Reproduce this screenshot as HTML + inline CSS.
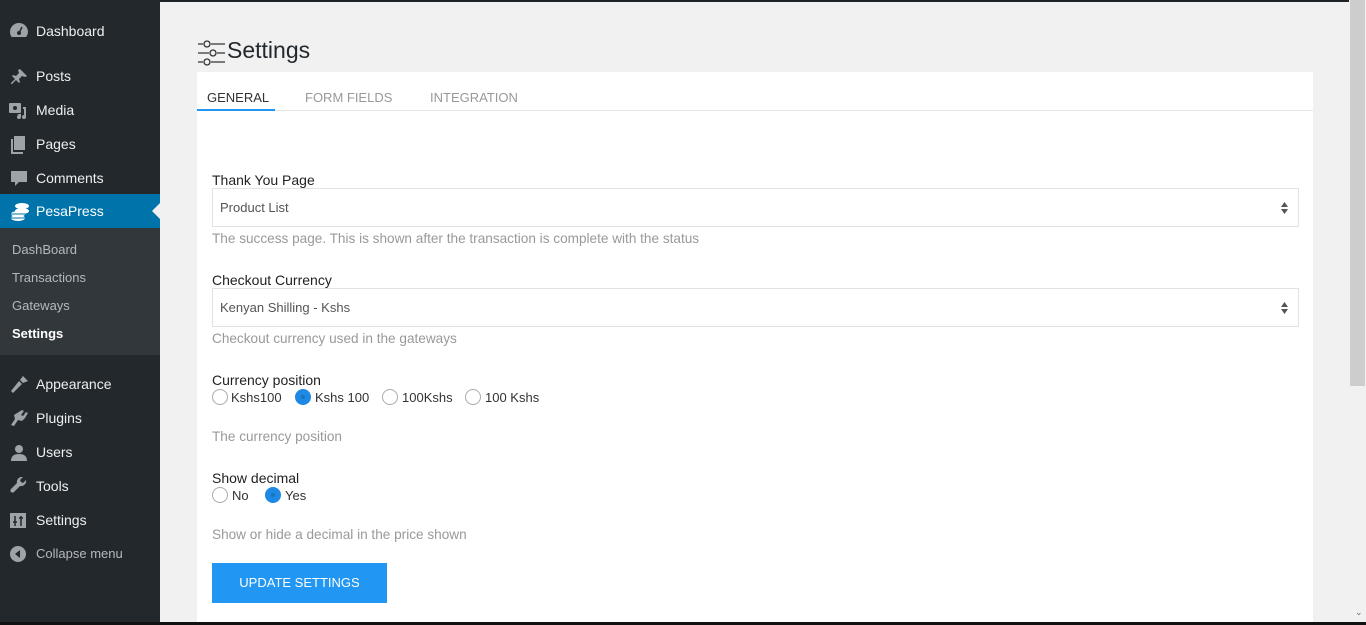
<!DOCTYPE html>
<html style="overflow:hidden"><head><meta charset="utf-8"><style>
*{box-sizing:border-box;margin:0;padding:0}
html,body{width:1366px;height:625px;overflow:hidden}
body{background:#f1f1f1;font-family:"Liberation Sans",sans-serif;position:relative}
#side{position:absolute;left:0;top:0;width:160px;height:625px;background:#23282d}
.mi{position:absolute;left:0;width:160px;height:34px;color:#eee;font-size:14px;line-height:34px;padding-left:36px}
.mi svg{position:absolute;left:9px;top:8px}
.sub{position:absolute;left:0;top:228px;width:160px;height:127px;background:#32373c}
.sub div{position:absolute;left:12px;font-size:13px;color:#b4b9be}
.t{position:absolute;white-space:nowrap}
.card{position:absolute;left:197px;top:72px;width:1116px;height:550px;background:#fff}
.sel{position:absolute;left:212px;width:1087px;height:39px;border:1px solid #e2e2e2;font-size:13px;color:#555;line-height:37px;padding-left:7px}
.arr{position:absolute;right:10px;top:12px;width:7px;height:14px}
.lbl{font-size:14px;color:#222}
.help{font-size:13.6px;color:#999}
.r{position:absolute;width:16px;height:16px;border-radius:50%;border:1px solid #aaa;background:#fff}
.r.on{background:#1e88e5;border-color:#1e88e5}
.r.on:after{content:"";position:absolute;left:5px;top:5px;width:4px;height:4px;border-radius:50%;background:#1976b8}
</style></head><body>
<div id="side">
<div class="mi" style="top:14px">Dashboard<svg width="20" height="18" viewBox="0 0 20 18"><path d="M10 1a9 9 0 0 0-9 9c0 2 .7 3.7 1.8 5h14.4A9 9 0 0 0 19 10a9 9 0 0 0-9-9z" fill="#9ea3a8"/><circle cx="10" cy="11" r="2" fill="#23282d"/><path d="M10 11l3-6" stroke="#23282d" stroke-width="1.5"/></svg></div>
<div class="mi" style="top:59px">Posts<svg width="20" height="20" viewBox="0 0 20 20"><path d="M11 2l7 7-2 1-3-1-3 3 1 3-1 1-3-3-4 4-1 0 0-1 4-4-3-3 1-1 3 1 3-3-1-3z" fill="#9ea3a8"/></svg></div>
<div class="mi" style="top:93px">Media<svg width="20" height="20" viewBox="0 0 20 20"><rect x="0" y="2" width="12" height="10" rx="1" fill="#9ea3a8"/><circle cx="6" cy="7" r="2" fill="#23282d"/><path d="M14 6h3v10a2 2 0 1 1-2-2V8h-1z M8 13h4v3a2 2 0 1 1-2-2" fill="#9ea3a8"/></svg></div>
<div class="mi" style="top:127px">Pages<svg width="20" height="20" viewBox="0 0 20 20"><rect x="5" y="1" width="11" height="14" fill="#9ea3a8"/><path d="M2 4h2v13h10v2H2z" fill="#9ea3a8"/></svg></div>
<div class="mi" style="top:161px">Comments<svg width="20" height="20" viewBox="0 0 20 20"><path d="M2 2h16v11h-8l-4 4v-4H2z" fill="#9ea3a8"/></svg></div>
<div class="mi" style="top:194px;background:#0073aa;color:#fff">PesaPress<svg width="22" height="20" viewBox="0 0 22 20"><ellipse cx="13" cy="4" rx="7" ry="3" fill="#fff"/><ellipse cx="13" cy="9" rx="7" ry="3" fill="#fff"/><ellipse cx="9" cy="12" rx="7" ry="3" fill="#fff"/><ellipse cx="9" cy="16" rx="7" ry="3" fill="#fff"/><path d="M2 12h14M2 16h14" stroke="#0073aa"/></svg>
<div style="position:absolute;right:0;top:9px;width:0;height:0;border:8px solid transparent;border-right-color:#f1f1f1"></div></div>
<div class="sub"><div style="top:14px">DashBoard</div><div style="top:42px">Transactions</div><div style="top:70px">Gateways</div><div style="top:98px;color:#fff;font-weight:bold">Settings</div></div>
<div class="mi" style="top:367px">Appearance<svg width="20" height="20" viewBox="0 0 20 20"><path d="M14 1l5 5-5 2-3-3z M10 6l3 3-9 9-2-2z" fill="#9ea3a8"/></svg></div>
<div class="mi" style="top:401px">Plugins<svg width="20" height="20" viewBox="0 0 20 20"><path d="M13 1l2 1-3 4 2 1 3-4 2 1-3 5-3 3-4-1-4 6-3-1 4-6-1-4z" fill="#9ea3a8"/></svg></div>
<div class="mi" style="top:435px">Users<svg width="20" height="20" viewBox="0 0 20 20"><circle cx="10" cy="6" r="4" fill="#9ea3a8"/><path d="M2 18c0-5 3-7 8-7s8 2 8 7z" fill="#9ea3a8"/></svg></div>
<div class="mi" style="top:469px">Tools<svg width="20" height="20" viewBox="0 0 20 20"><path d="M17 3l-3 3-2-1-1-2 3-3a5 5 0 0 0-6 6L2 12a2 2 0 0 0 3 3l6-6a5 5 0 0 0 6-6z" fill="#9ea3a8"/></svg></div>
<div class="mi" style="top:503px">Settings<svg width="20" height="20" viewBox="0 0 20 20"><rect x="1" y="2" width="16" height="15" fill="#9ea3a8"/><path d="M6 5v10M4 11h4M12 5v10M10 7h4" stroke="#23282d" stroke-width="1.5"/></svg></div>
<div class="mi" style="top:537px;color:#b4b9be;font-size:13px">Collapse menu<svg width="20" height="20" viewBox="0 0 20 20"><circle cx="9" cy="9" r="8" fill="#9ea3a8"/><path d="M11 5v8l-5-4z" fill="#23282d"/></svg></div>
</div>
<div style="position:absolute;left:160px;top:0;width:1189px;height:2px;background:#1d2327"></div>
<div class="card"></div>
<div style="position:absolute;left:0;top:622px;width:1366px;height:3px;background:#111"></div>
<div style="position:absolute;left:1349px;top:0;width:17px;height:622px;background:#f1f1f1"></div>
<div style="position:absolute;left:1350px;top:0;width:15px;height:386px;background:#cdcdcd"></div>
<div class="t" style="left:1355px;top:607px;font-size:9px;color:#666">&#8964;</div>

<svg style="position:absolute;left:198px;top:40px" width="28" height="26" viewBox="0 0 28 26"><g stroke="#333" stroke-width="1.3" fill="none"><path d="M0 4h5M13 4h14"/><circle cx="9" cy="4" r="3"/><path d="M0 13h11M19 13h8"/><circle cx="15" cy="13" r="3"/><path d="M0 22h5M13 22h14"/><circle cx="9" cy="22" r="3"/></g></svg>
<div class="t" style="left:227px;top:37px;font-size:23px;color:#23282d">Settings</div>
<div style="position:absolute;left:197px;top:110px;width:1116px;height:1px;background:#e5e5e5"></div>
<div style="position:absolute;left:197px;top:109px;width:78px;height:2px;background:#2196f3"></div>
<div class="t" style="left:207px;top:90px;font-size:13px;color:#333">GENERAL</div>
<div class="t" style="left:305px;top:90px;font-size:13px;color:#999">FORM FIELDS</div>
<div class="t" style="left:430px;top:90px;font-size:13px;color:#999">INTEGRATION</div>

<div class="t lbl" style="left:212px;top:172px">Thank You Page</div>
<div class="sel" style="top:188px">Product List<svg class="arr" viewBox="0 0 7 14"><path d="M3.5 1L7 6H0zM3.5 13L7 8H0z" fill="#555"/></svg></div>
<div class="t help" style="left:212px;top:231px">The success page. This is shown after the transaction is complete with the status</div>

<div class="t lbl" style="left:212px;top:272px">Checkout Currency</div>
<div class="sel" style="top:288px">Kenyan Shilling - Kshs<svg class="arr" viewBox="0 0 7 14"><path d="M3.5 1L7 6H0zM3.5 13L7 8H0z" fill="#555"/></svg></div>
<div class="t help" style="left:212px;top:331px">Checkout currency used in the gateways</div>

<div class="t lbl" style="left:212px;top:372px">Currency position</div>
<div class="r" style="left:212px;top:389px"></div><div class="t" style="left:231px;top:390px;font-size:13px;color:#333">Kshs100</div>
<div class="r on" style="left:295px;top:389px"></div><div class="t" style="left:315px;top:390px;font-size:13px;color:#333">Kshs 100</div>
<div class="r" style="left:382px;top:389px"></div><div class="t" style="left:402px;top:390px;font-size:13px;color:#333">100Kshs</div>
<div class="r" style="left:465px;top:389px"></div><div class="t" style="left:485px;top:390px;font-size:13px;color:#333">100 Kshs</div>
<div class="t help" style="left:212px;top:429px">The currency position</div>

<div class="t lbl" style="left:212px;top:470px">Show decimal</div>
<div class="r" style="left:212px;top:487px"></div><div class="t" style="left:232px;top:488px;font-size:13px;color:#333">No</div>
<div class="r on" style="left:265px;top:487px"></div><div class="t" style="left:285px;top:488px;font-size:13px;color:#333">Yes</div>
<div class="t help" style="left:212px;top:527px">Show or hide a decimal in the price shown</div>

<div style="position:absolute;left:212px;top:563px;width:175px;height:40px;background:#2196f3;color:#fff;font-size:13px;text-align:center;line-height:40px">UPDATE SETTINGS</div>
</body></html>
